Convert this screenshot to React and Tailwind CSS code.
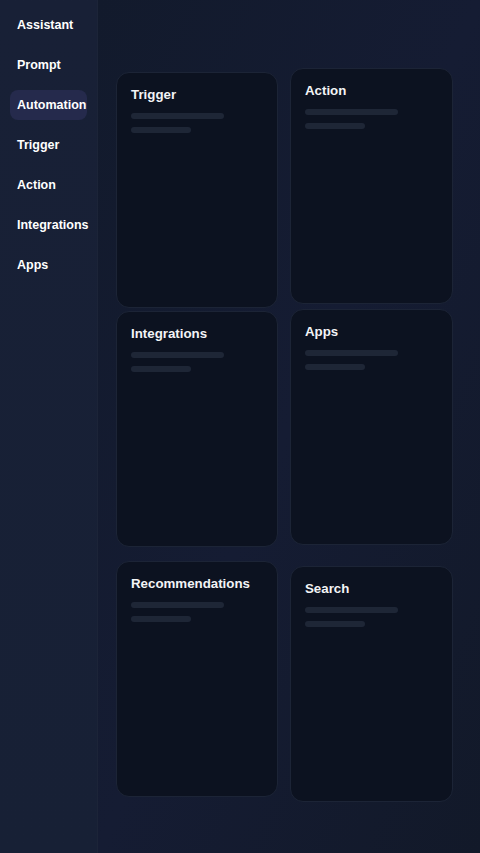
import React from 'react';

const navItems = ['Assistant', 'Prompt', 'Automation', 'Trigger', 'Action', 'Integrations', 'Apps'];

// small offsets so cards sit like the staggered layout
const cards = [
  { title: 'Trigger', shift: 'translate-y-[4px]' },
  { title: 'Action', shift: 'translate-y-0' },
  { title: 'Integrations', shift: 'translate-y-[3px]' },
  { title: 'Apps', shift: 'translate-y-[1px]' },
  { title: 'Recommendations', shift: 'translate-y-[13px]' },
  { title: 'Search', shift: 'translate-y-[18px]' },
];

const Card = ({ title, shift }) => (
  <div
    className={`h-[236px] rounded-[13px] border border-[#1c2436] bg-[#0c1220] px-[14px] pt-[14px] ${shift}`}
  >
    <h3 className="text-[13.3px] font-bold leading-[16px] text-[#f3f4f6]">{title}</h3>
    <div className="mt-[10px] h-[6px] w-[93px] rounded-full bg-[#1e2636]"></div>
    <div className="mt-[8px] h-[6px] w-[60px] rounded-full bg-[#1e2636]"></div>
  </div>
);

const App = () => {
  return (
    <div
      className="flex h-[853px] w-[480px] overflow-hidden bg-[#131a2b]"
      style={{ fontFamily: '"Liberation Sans", Arial, sans-serif' }}
    >
      <aside className="flex h-full w-[98px] shrink-0 flex-col gap-[10px] border-r border-[#1c2438] bg-gradient-to-b from-[#182036] to-[#172035] pl-[10px] pr-[10px] pt-[10px]">
        {navItems.map((item) => (
          <div
            key={item}
            className={`flex h-[30px] items-center rounded-lg px-[7px] text-[12.5px] font-bold text-white ${
              item === 'Automation' ? 'bg-[#252a4c]' : ''
            }`}
          >
            {item}
          </div>
        ))}
      </aside>

      <main className="flex-1 bg-gradient-to-br from-[#121a2c] via-[#151c33] to-[#121929] pl-[18px] pt-[68px]">
        <div className="grid grid-cols-[162px_163px] gap-x-3 gap-y-[4px]">
          {cards.map((card) => (
            <Card key={card.title} {...card} />
          ))}
        </div>
      </main>
    </div>
  );
};

export default App;
